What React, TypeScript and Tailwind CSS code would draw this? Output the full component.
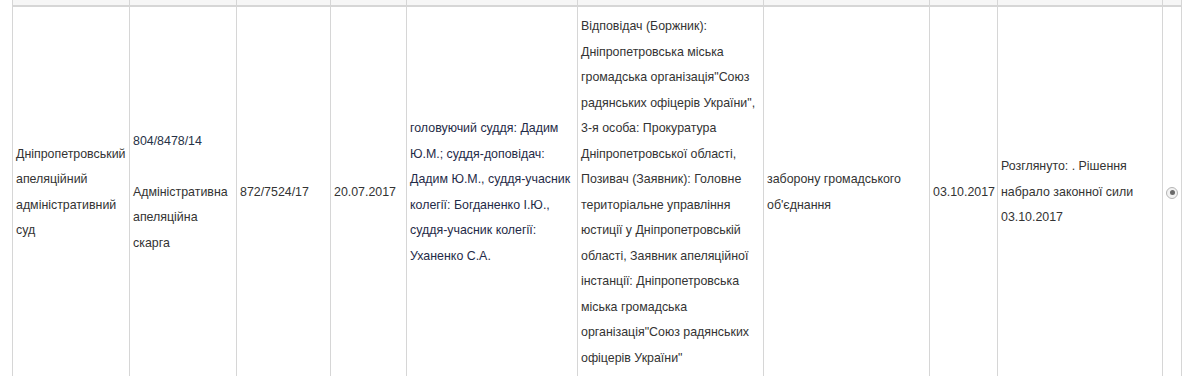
import React from 'react';

const widths = [117, 107, 94, 76, 171, 186, 166, 68, 165, 19];

const cell = 'border border-[#d6d6d6] px-[3px] py-[7px] align-middle';

const App: React.FC = () => {
  return (
    <div className="min-h-[376px] w-[1193px] overflow-hidden bg-white font-['Liberation_Sans',Arial,sans-serif] text-[12.4px] leading-[25.5px] text-[#333]">
      <table className="ml-[12px] mt-[-1px] table-fixed border-collapse" style={{ width: 1170 }}>
        <colgroup>
          {widths.map((w, i) => (
            <col key={i} style={{ width: w }} />
          ))}
        </colgroup>
        <thead>
          <tr className="h-[7px] bg-[#f6f6f6]">
            {widths.map((_, i) => (
              <th key={i} className="border-x border-b-2 border-[#d6d6d6] p-0 leading-[0]" />
            ))}
          </tr>
        </thead>
        <tbody>
          <tr>
            <td className={cell}>Дніпропетровський апеляційний адміністративний суд</td>
            <td className={cell}>
              <span className="text-[#273247]">804/8478/14</span>
              <br />
              <br />
              Адміністративна апеляційна скарга
            </td>
            <td className={cell}>872/7524/17</td>
            <td className={cell}>20.07.2017</td>
            <td className={`${cell} text-[#1f2b48]`}>
              головуючий суддя: Дадим Ю.М.; суддя-доповідач: Дадим Ю.М., суддя-учасник колегії: Богданенко І.Ю., суддя-учасник колегії: Уханенко С.А.
            </td>
            <td className={cell}>
              Відповідач (Боржник): Дніпропетровська міська громадська організація"Союз радянських офіцерів України", 3-я особа: Прокуратура Дніпропетровської області, Позивач (Заявник): Головне територіальне управління юстиції у Дніпропетровській області, Заявник апеляційної інстанції: Дніпропетровська міська громадська організація"Союз радянських офіцерів України"
            </td>
            <td className={cell}>заборону громадського об'єднання</td>
            <td className={cell}>03.10.2017</td>
            <td className={cell}>Розглянуто: . Рішення набрало законної сили 03.10.2017</td>
            <td className={`${cell} px-0`}>
              <div className="flex justify-center">
                <span className="flex h-[12px] w-[12px] items-center justify-center rounded-full border border-[#b5b5b5] bg-[#f2f2f2]">
                  <span className="h-[5px] w-[5px] rounded-full bg-[#6a6a6a]" />
                </span>
              </div>
            </td>
          </tr>
        </tbody>
      </table>
    </div>
  );
};

export default App;
